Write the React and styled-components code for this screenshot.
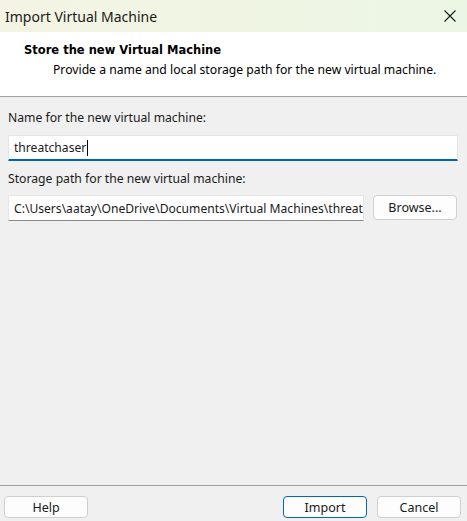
import React from "react";
import styled, { createGlobalStyle } from "styled-components";

const Global = createGlobalStyle`
  html, body { margin: 0; padding: 0; background: #f0f0f0; }
  #root { width: 467px; height: 521px; }
  * { box-sizing: border-box; }
`;

const Window = styled.div`
  width: 467px;
  height: 521px;
  display: flex;
  flex-direction: column;
  background: #f0f0f0;
  font-family: "Noto Sans", "Liberation Sans", sans-serif;
  color: #000;
  overflow: hidden;
`;

const TitleBar = styled.div`
  height: 32px;
  flex: none;
  display: flex;
  align-items: center;
  justify-content: space-between;
  padding: 0 11px 0 5px;
  background: linear-gradient(90deg, #f4f4e5 0%, #f0f5e3 50%, #ecf6e5 100%);
  font-size: 14px;
  color: #1a1a1a;
`;

const CloseIcon = () => (
  <svg width="12" height="12" viewBox="0 0 12 12">
    <path d="M0.5 0.5L11.5 11.5M11.5 0.5L0.5 11.5" stroke="#1a1a1a" strokeWidth="1.1" />
  </svg>
);

const Header = styled.div`
  height: 65px;
  flex: none;
  background: #fff;
  border-bottom: 1px solid #a0a0a0;
  padding: 10px 0 0 24px;
  display: flex;
  flex-direction: column;
  gap: 4px;
`;

const HeaderTitle = styled.div`
  font-family: "DejaVu Sans", sans-serif;
  font-weight: bold;
  font-size: 11.5px;
  line-height: 16px;
`;

const HeaderSub = styled.div`
  font-size: 12.2px;
  line-height: 16px;
  padding-left: 29px;
  color: #000;
`;

const Body = styled.div`
  flex: 1;
  padding: 13px 9px 0 8px;
  display: flex;
  flex-direction: column;
`;

const Label = styled.div`
  font-size: 12.2px;
  line-height: 16px;
  color: #1a1a1a;
  margin-bottom: ${(p) => p.$gap || 9}px;
`;

const Row = styled.div`
  display: flex;
  gap: 9px;
  align-items: flex-start;
`;

const Field = styled.div`
  height: 26px;
  width: 100%;
  flex: none;
  background: #fff;
  border: 1px solid #e5e5e5;
  border-bottom: 2px solid #0062b8;
  border-radius: 2px 2px 0 0;
  padding: 0 0 0 5px;
  display: flex;
  align-items: center;
  font-size: 12.1px;
  color: #1a1a1a;
  white-space: nowrap;
  overflow: hidden;
  margin-bottom: 10px;
`;

const PathInput = styled.input`
  height: 26px;
  width: 356px;
  flex: none;
  background: #fff;
  border: 1px solid #e5e5e5;
  border-bottom: 1px solid #8a8a8a;
  border-radius: 2px 2px 0 0;
  padding: 0 0 0 5px;
  margin: 0;
  font-family: "Noto Sans", "Liberation Sans", sans-serif;
  font-size: 12.1px;
  color: #1a1a1a;
  outline: none;
`;

const Caret = styled.span`
  display: inline-block;
  width: 1px;
  height: 16px;
  background: #000;
  margin-left: 1px;
`;

const Button = styled.button`
  width: 84px;
  height: ${(p) => p.$h || 22}px;
  flex: none;
  background: #fdfdfd;
  border: 1px solid ${(p) => (p.$primary ? "#0067c0" : "#d0d0d0")};
  border-radius: 4px;
  font-family: "Noto Sans", "Liberation Sans", sans-serif;
  font-size: 12.5px;
  color: #1a1a1a;
  padding: 0;
  cursor: default;
`;

const Footer = styled.div`
  flex: none;
  border-top: 1px solid #a0a0a0;
  padding: 10px 6px 3px 4px;
  display: flex;
  align-items: center;
  gap: 10px;
`;

const Spacer = styled.div`
  flex: 1;
`;

export default function App() {
  return (
    <>
      <Global />
      <Window>
        <TitleBar>
          <span>Import Virtual Machine</span>
          <CloseIcon />
        </TitleBar>
        <Header>
          <HeaderTitle>Store the new Virtual Machine</HeaderTitle>
          <HeaderSub>Provide a name and local storage path for the new virtual machine.</HeaderSub>
        </Header>
        <Body>
          <Label>Name for the new virtual machine:</Label>
          <Field>
            threatchaser
            <Caret />
          </Field>
          <Label $gap={8}>Storage path for the new virtual machine:</Label>
          <Row>
            <PathInput
              readOnly
              value="C:\Users\aatay\OneDrive\Documents\Virtual Machines\threatchaser"
            />
            <Button $h={25}>Browse...</Button>
          </Row>
        </Body>
        <Footer>
          <Button>Help</Button>
          <Spacer />
          <Button $primary>Import</Button>
          <Button>Cancel</Button>
        </Footer>
      </Window>
    </>
  );
}
